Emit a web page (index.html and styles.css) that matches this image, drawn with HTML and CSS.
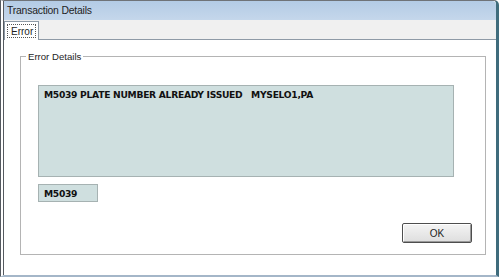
FILE: index.html
```html
<!DOCTYPE html>
<html lang="en">
<head>
  <meta charset="UTF-8">
  <title>Transaction Details</title>
  <link rel="stylesheet" href="styles.css">
</head>
<body>
  <div class="window">
    <div class="titlebar">Transaction Details</div>
    <div class="tabs">
      <div class="tab"><span class="focus">Error</span></div>
    </div>
    <div class="page">
      <fieldset class="group">
        <legend>Error Details</legend>
        <div class="message">M5039 PLATE NUMBER ALREADY ISSUED   MYSELO1,PA</div>
        <div class="code">M5039</div>
        <div class="actions">
          <button class="ok">OK</button>
        </div>
      </fieldset>
    </div>
  </div>
</body>
</html>
```

FILE: styles.css
```css
body {
  margin: 0;
  background-color: #fff;
  font-family: "Liberation Sans", Arial, sans-serif;
  font-size: 10px;
  color: #1e1e1e;
}

.window {
  width: 499px;
  height: 277px;
  box-sizing: border-box;
  border-top: 1px solid #6f7378;
  border-left: 4px double #555a60;
  border-right: 3px solid #3f6c7c;
  border-bottom: 2px solid #a4b6c8;
  border-top-right-radius: 5px;
  display: flex;
  flex-direction: column;
  background-color: #fff;
}

.titlebar {
  height: 19px;
  line-height: 19px;
  padding-left: 3px;
  background: linear-gradient(#b3cbe5, #c5d7eb);
  font-size: 10.4px;
  letter-spacing: -0.2px;
  border-top-right-radius: 4px;
}

.tabs {
  height: 20px;
  box-sizing: border-box;
  background-color: #f0f0f0;
  border-bottom: 1px solid #8e9aa6;
  display: flex;
  align-items: flex-end;
}

.tab {
  width: 35px;
  height: 19px;
  box-sizing: border-box;
  margin-bottom: -1px;
  padding: 2px 2px 0 2px;
  background-color: #fff;
  border: 1px solid #8e9aa6;
  border-bottom: none;
}

.focus {
  display: block;
  height: 14px;
  line-height: 13px;
  padding-left: 3px;
  box-sizing: border-box;
  border: 1px dotted #555;
}

.page {
  flex: 1;
  padding: 10px 10px 0 16px;
}

.group {
  margin: 0;
  padding: 0 13px 11px 17px;
  height: 205px;
  box-sizing: border-box;
  border: 1px solid #b4b4b4;
  display: flex;
  flex-direction: column;
}

.group legend {
  margin-left: -12px;
  padding: 0 2px 0 2px;
  font-size: 9.6px;
  line-height: 13px;
}

.message,
.code {
  box-sizing: border-box;
  background-color: #cfdfdf;
  border: 1px solid #a6b2b2;
  font-family: "DejaVu Sans", Verdana, sans-serif;
  font-weight: bold;
  font-size: 9.2px;
  letter-spacing: -0.3px;
  line-height: 11px;
  color: #111;
  white-space: pre;
  padding: 3px 0 0 5px;
}

.message {
  margin-top: 22px;
  width: 416px;
  height: 92px;
}

.code {
  margin-top: 7px;
  width: 60px;
  height: 18px;
}

.actions {
  display: flex;
  justify-content: flex-end;
  margin-top: 21px;
}

.ok {
  width: 70px;
  height: 20px;
  padding: 0;
  font-family: "Liberation Sans", Arial, sans-serif;
  font-size: 10px;
  color: #1e1e1e;
  border: 1px solid #4e4e4e;
  border-radius: 2px;
  background: linear-gradient(#f4f4f4, #dedede);
  box-shadow: inset 1px 1px 0 #fff, inset -1px -1px 0 #9a9a9a;
}
```
